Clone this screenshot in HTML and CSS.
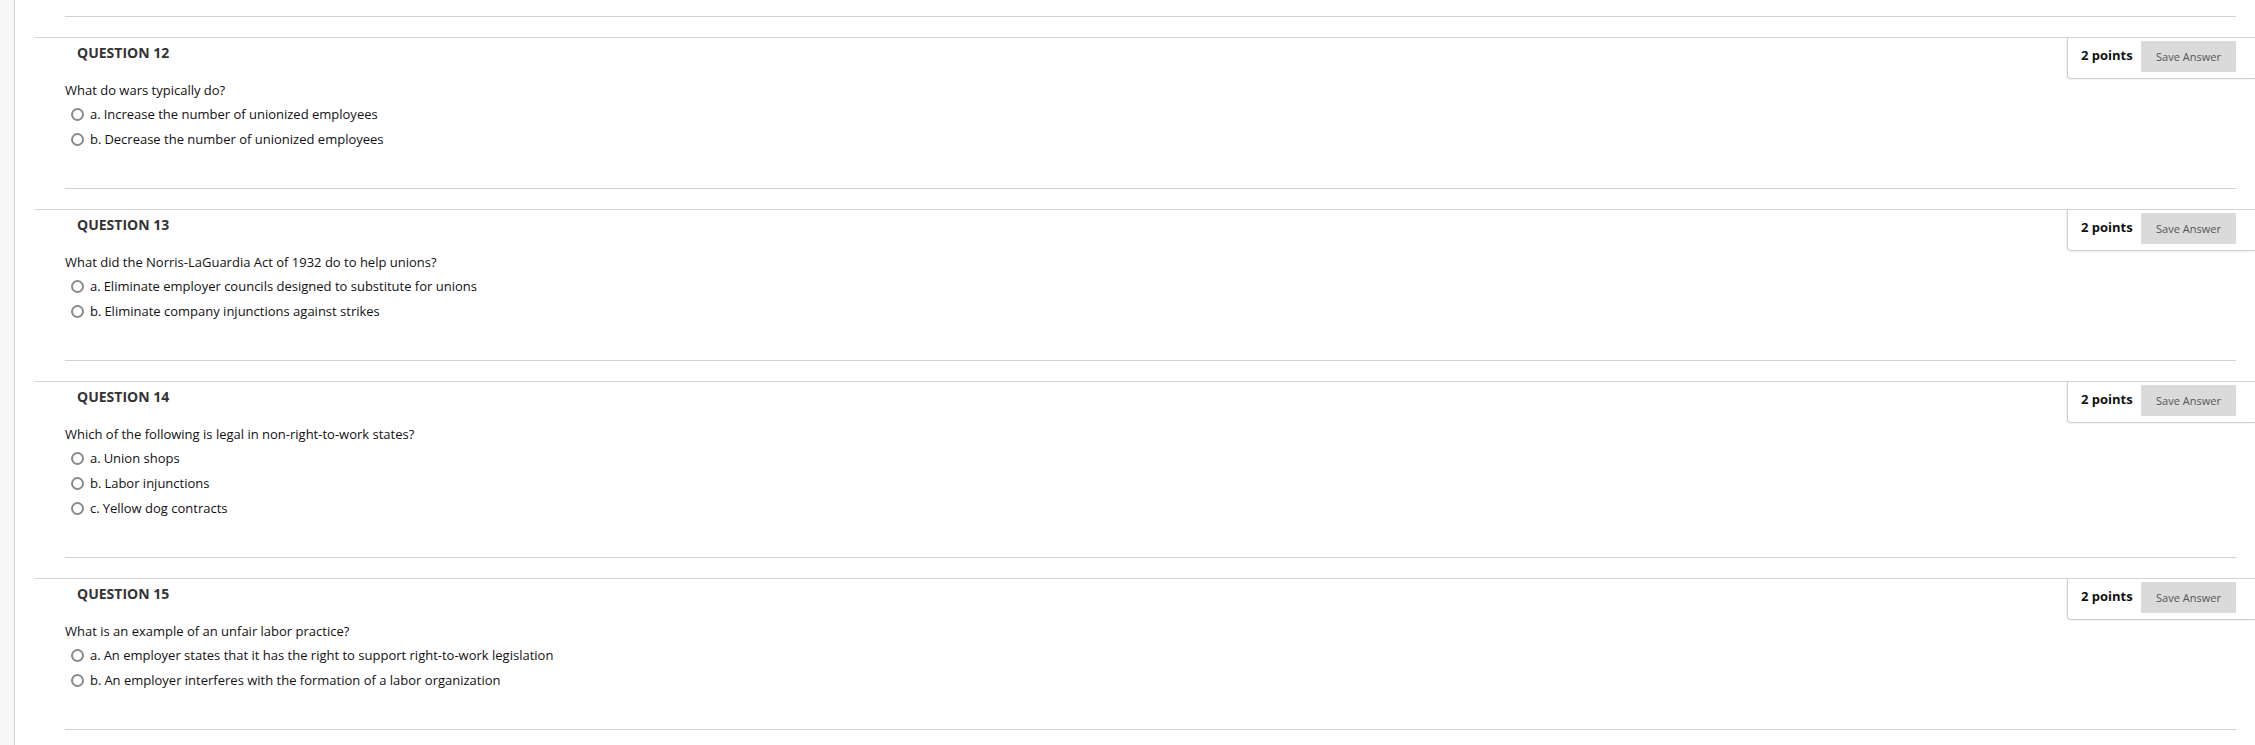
FILE: index.html
```html
<!DOCTYPE html>
<html lang="en">
<head>
<meta charset="utf-8">
<title>Test</title>
<link rel="stylesheet" href="styles.css">
</head>
<body>
<div class="page">
  <aside class="sidebar"></aside>
  <main class="content">
    <div class="rule rule-first"></div>

    <section class="question">
      <div class="q-header">
        <h3 class="q-title">QUESTION 12</h3>
        <div class="points-box">
          <span class="points">2 points</span>
          <button class="save-btn" type="button">Save Answer</button>
        </div>
      </div>
      <div class="q-body">
        <p class="q-text">What do wars typically do?</p>
        <ul class="options">
          <li class="option"><span class="radio"></span><span class="opt-label">a.</span><span>Increase the number of unionized employees</span></li>
          <li class="option"><span class="radio"></span><span class="opt-label">b.</span><span>Decrease the number of unionized employees</span></li>
        </ul>
      </div>
      <div class="rule"></div>
    </section>

    <section class="question">
      <div class="q-header">
        <h3 class="q-title">QUESTION 13</h3>
        <div class="points-box">
          <span class="points">2 points</span>
          <button class="save-btn" type="button">Save Answer</button>
        </div>
      </div>
      <div class="q-body">
        <p class="q-text">What did the Norris-LaGuardia Act of 1932 do to help unions?</p>
        <ul class="options">
          <li class="option"><span class="radio"></span><span class="opt-label">a.</span><span>Eliminate employer councils designed to substitute for unions</span></li>
          <li class="option"><span class="radio"></span><span class="opt-label">b.</span><span>Eliminate company injunctions against strikes</span></li>
        </ul>
      </div>
      <div class="rule"></div>
    </section>

    <section class="question">
      <div class="q-header">
        <h3 class="q-title">QUESTION 14</h3>
        <div class="points-box">
          <span class="points">2 points</span>
          <button class="save-btn" type="button">Save Answer</button>
        </div>
      </div>
      <div class="q-body">
        <p class="q-text">Which of the following is legal in non-right-to-work states?</p>
        <ul class="options">
          <li class="option"><span class="radio"></span><span class="opt-label">a.</span><span>Union shops</span></li>
          <li class="option"><span class="radio"></span><span class="opt-label">b.</span><span>Labor injunctions</span></li>
          <li class="option"><span class="radio"></span><span class="opt-label">c.</span><span>Yellow dog contracts</span></li>
        </ul>
      </div>
      <div class="rule"></div>
    </section>

    <section class="question">
      <div class="q-header">
        <h3 class="q-title">QUESTION 15</h3>
        <div class="points-box">
          <span class="points">2 points</span>
          <button class="save-btn" type="button">Save Answer</button>
        </div>
      </div>
      <div class="q-body">
        <p class="q-text">What is an example of an unfair labor practice?</p>
        <ul class="options">
          <li class="option"><span class="radio"></span><span class="opt-label">a.</span><span>An employer states that it has the right to support right-to-work legislation</span></li>
          <li class="option"><span class="radio"></span><span class="opt-label">b.</span><span>An employer interferes with the formation of a labor organization</span></li>
        </ul>
      </div>
      <div class="rule"></div>
    </section>
  </main>
</div>
</body>
</html>
```

FILE: styles.css
```css
* { box-sizing: border-box; }

html, body {
  margin: 0;
  padding: 0;
  background: #ffffff;
}

body {
  font-family: "Open Sans", "Noto Sans", "Liberation Sans", sans-serif;
  color: #1a1a1a;
  overflow: hidden;
}

.page {
  display: flex;
  min-height: 745px;
}

.sidebar {
  width: 15px;
  flex: 0 0 15px;
  background: #f7f7f7;
  border-right: 1px solid #cfcfcf;
}

.content {
  flex: 1;
  min-width: 0;
}

.rule {
  height: 1px;
  background: #d2d2d2;
  margin-left: 30px;
  margin-right: 19px;
}

.rule-first {
  margin-top: 16px;
  margin-left: 50px;
}

.question {
  margin-top: 20px;
  margin-left: 20px;
  border-top: 1px solid #d2d2d2;
}

.q-header {
  display: flex;
  justify-content: space-between;
  align-items: flex-start;
}

.q-title {
  margin: 0;
  padding: 5px 0 0 42px;
  font-size: 14px;
  line-height: 20px;
  font-weight: 700;
  color: #333333;
}

.points-box {
  display: flex;
  align-items: flex-start;
  width: 188px;
  height: 41px;
  padding: 3px 19px 0 13px;
  border-left: 1px solid #cfcfcf;
  border-bottom: 1px solid #cfcfcf;
  border-bottom-left-radius: 4px;
  box-shadow: -1px 1px 2px rgba(0, 0, 0, 0.06);
}

.points {
  font-size: 13px;
  font-weight: 700;
  line-height: 18px;
  color: #111111;
  padding-top: 5px;
  margin-right: auto;
  white-space: nowrap;
}

.save-btn {
  flex: 0 0 95px;
  width: 95px;
  height: 31px;
  border: 0;
  border-radius: 1px;
  background: #dadada;
  color: #555555;
  font-family: inherit;
  font-size: 11px;
  line-height: 15px;
  padding: 0;
}

.q-body {
  padding: 2px 0 0 30px;
}

.q-text {
  margin: 0 0 3px 0;
  font-size: 13px;
  line-height: 18px;
  color: #111111;
}

.options {
  list-style: none;
  margin: 0 0 36px 6px;
  padding: 0;
}

.option {
  display: flex;
  align-items: center;
  height: 25px;
  font-size: 13px;
  line-height: 25px;
  color: #111111;
}

.radio {
  width: 13px;
  height: 13px;
  flex: 0 0 13px;
  border: 2px solid #8a8a8a;
  border-radius: 50%;
  background: #ffffff;
  margin-right: 6px;
}

.opt-label {
  margin-right: 3px;
}
```
